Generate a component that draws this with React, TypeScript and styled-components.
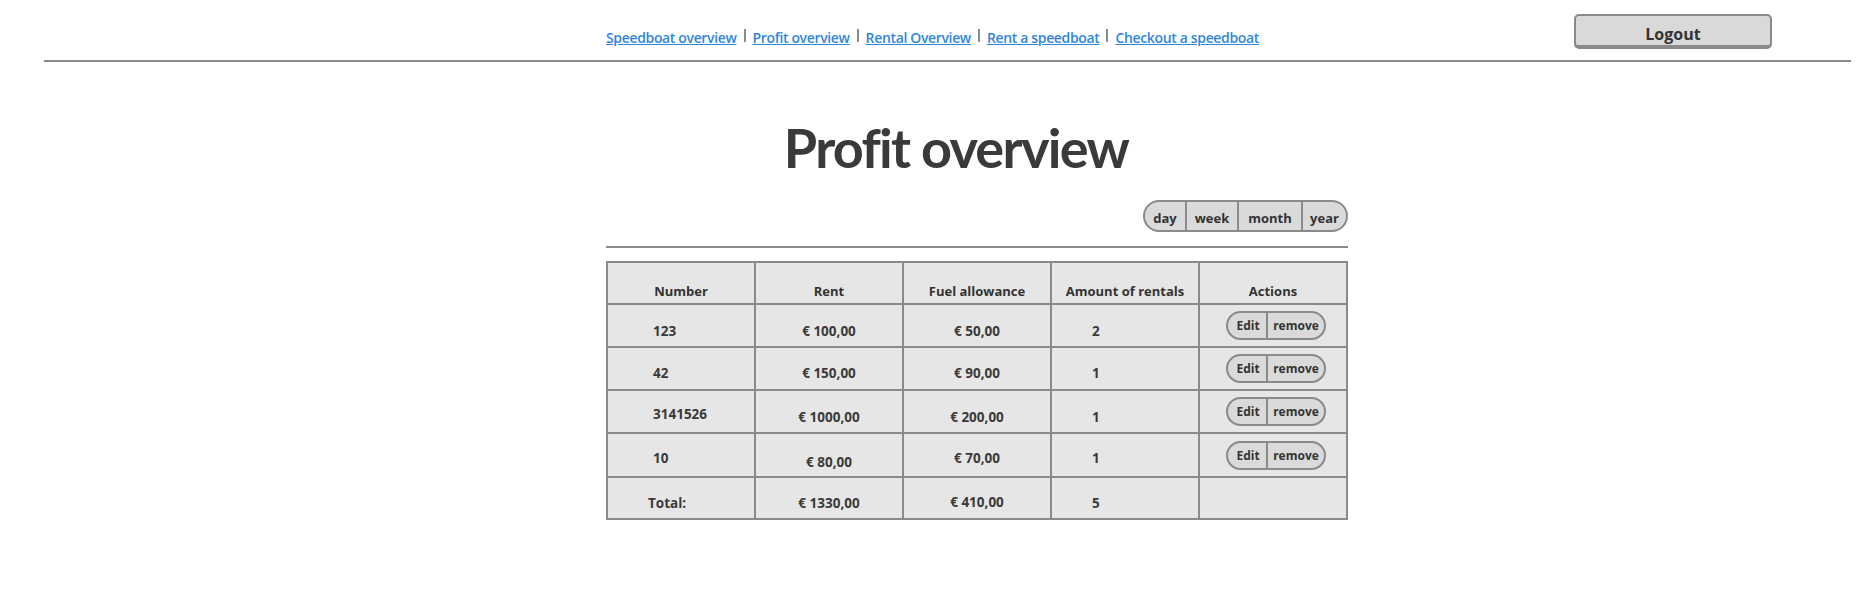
import React from "react";
import styled, { createGlobalStyle } from "styled-components";

const Global = createGlobalStyle`
  html, body { margin: 0; padding: 0; background: #ffffff; }
  body { font-family: "Open Sans", "Liberation Sans", sans-serif; color: #3a3a3a; }
`;

const Page = styled.div`
  width: 1872px;
  height: 600px;
  display: flex;
  flex-direction: column;
`;

const Header = styled.header`
  margin-left: 44px;
  width: 1807px;
  height: 62px;
  box-sizing: border-box;
  border-bottom: 2px solid #8a8a8a;
  display: flex;
  align-items: flex-start;
  padding-left: 562px;
`;

const Nav = styled.nav`
  display: flex;
  align-items: center;
  margin-top: 28px;
`;

const NavLink = styled.a`
  font-size: 14px;
  font-weight: 600;
  color: #2f86db;
  text-decoration: underline;
  text-underline-offset: 1px;
  letter-spacing: -0.35px;
  cursor: pointer;
`;

const Sep = styled.span`
  display: inline-block;
  width: 2px;
  height: 13px;
  background: #8a8a8a;
  margin: 0 7px;
  position: relative;
  top: -2px;
`;

const LogoutButton = styled.button`
  margin-left: auto;
  margin-right: 79px;
  margin-top: 14px;
  width: 198px;
  height: 35px;
  box-sizing: border-box;
  background: #d9d9d9;
  border: 2px solid #8a8a8a;
  border-bottom-width: 4px;
  border-radius: 5px;
  font-family: inherit;
  font-size: 16px;
  font-weight: 700;
  color: #333;
  padding: 7px 0 0 0;
  cursor: pointer;
`;

const Title = styled.h1`
  margin: 56px 0 0 0;
  text-align: center;
  font-family: Lato, "Open Sans", sans-serif;
  font-size: 54px;
  line-height: 60px;
  font-weight: 700;
  color: #3a3a3a;
  letter-spacing: -1.7px;
  padding-left: 40px;
`;

const Content = styled.section`
  margin-left: 606px;
  width: 742px;
  display: flex;
  flex-direction: column;
`;

const Toolbar = styled.div`
  display: flex;
  justify-content: flex-end;
  margin-top: 22px;
`;

const Segmented = styled.div`
  display: flex;
  height: 32px;
  box-sizing: border-box;
  border: 2px solid #8a8a8a;
  border-radius: 16px;
  overflow: hidden;
  background: #dadada;
`;

const Segment = styled.button<{ $w: number }>`
  width: ${(p) => p.$w}px;
  height: 100%;
  box-sizing: border-box;
  background: transparent;
  border: none;
  border-left: 2px solid #8a8a8a;
  font-family: inherit;
  font-size: 13px;
  font-weight: 700;
  color: #333;
  padding: 4px 0 0 0;
  cursor: pointer;
  &:first-child { border-left: none; }
`;

const Rule = styled.hr`
  margin: 14px 0 0 0;
  border: none;
  height: 2px;
  background: #8a8a8a;
`;

const Table = styled.table`
  margin-top: 13px;
  border-collapse: collapse;
  width: 742px;
  table-layout: fixed;
  background: #e6e6e6;
  border: 2px solid #8a8a8a;
`;

const Th = styled.th`
  border: 2px solid #8a8a8a;
  height: 42px;
  box-sizing: border-box;
  padding: 16px 0 0 0;
  font-size: 13px;
  font-weight: 700;
  color: #333;
  text-align: center;
  vertical-align: middle;
`;

const Td = styled.td<{ $align?: "left" | "center"; $indent?: number; $drop?: number; $h?: number }>`
  border: 2px solid #8a8a8a;
  height: ${(p) => p.$h ?? 43}px;
  box-sizing: border-box;
  padding: ${(p) => p.$drop ?? 12}px 0 0 ${(p) => p.$indent ?? 0}px;
  font-size: 13.5px;
  font-weight: 700;
  color: #3a3a3a;
  text-align: ${(p) => p.$align ?? "center"};
  vertical-align: middle;
  white-space: pre;
`;

const ActionCell = styled.td`
  border: 2px solid #8a8a8a;
  box-sizing: border-box;
  padding: 0;
  vertical-align: middle;
  text-align: center;
`;

const Pill = styled.div`
  display: inline-flex;
  height: 29px;
  box-sizing: border-box;
  border: 2px solid #8a8a8a;
  border-radius: 15px;
  overflow: hidden;
  background: #dadada;
  vertical-align: middle;
  margin-left: 6px;
`;

const PillButton = styled.button<{ $w: number }>`
  width: ${(p) => p.$w}px;
  height: 100%;
  box-sizing: border-box;
  background: transparent;
  border: none;
  border-left: 2px solid #8a8a8a;
  font-family: inherit;
  font-size: 12px;
  font-weight: 700;
  color: #333;
  padding: 0;
  cursor: pointer;
  &:first-child { border-left: none; padding-left: 2px; }
`;

type Row = {
  number: string;
  rent: string;
  fuel: string;
  amount: string;
  drops: [number, number, number, number];
  h: number;
};

const rows: Row[] = [
  { number: "123", rent: "€ 100,00", fuel: "€ 50,00", amount: "2", drops: [10, 10, 10, 10], h: 43 },
  { number: "42", rent: "€ 150,00", fuel: "€ 90,00", amount: "1", drops: [9, 9, 9, 9], h: 43 },
  { number: "3141526", rent: "€ 1000,00", fuel: "€ 200,00", amount: "1", drops: [4, 11, 11, 11], h: 43 },
  { number: "10", rent: "€ 80,00", fuel: "€ 70,00", amount: "1", drops: [5, 13, 5, 5], h: 44 },
];

const links = [
  "Speedboat overview",
  "Profit overview",
  "Rental Overview",
  "Rent a speedboat",
  "Checkout a speedboat",
];

export default function App() {
  return (
    <Page>
      <Global />
      <Header>
        <Nav>
          {links.map((l, i) => (
            <React.Fragment key={l}>
              {i > 0 && <Sep />}
              <NavLink>{l}</NavLink>
            </React.Fragment>
          ))}
        </Nav>
        <LogoutButton>Logout</LogoutButton>
      </Header>
      <Title>Profit overview</Title>
      <Content>
        <Toolbar>
          <Segmented>
            <Segment $w={40}>day</Segment>
            <Segment $w={52}>week</Segment>
            <Segment $w={64}>month</Segment>
            <Segment $w={45}>year</Segment>
          </Segmented>
        </Toolbar>
        <Rule />
        <Table>
          <thead>
            <tr>
              <Th>Number</Th>
              <Th>Rent</Th>
              <Th>Fuel allowance</Th>
              <Th>Amount of rentals</Th>
              <Th>Actions</Th>
            </tr>
          </thead>
          <tbody>
            {rows.map((r) => (
              <tr key={r.number}>
                <Td $align="left" $indent={45} $drop={r.drops[0]} $h={r.h}>{r.number}</Td>
                <Td $drop={r.drops[1]} $h={r.h}>{r.rent}</Td>
                <Td $drop={r.drops[2]} $h={r.h}>{r.fuel}</Td>
                <Td $align="left" $indent={40} $drop={r.drops[3]} $h={r.h}>{r.amount}</Td>
                <ActionCell>
                  <Pill>
                    <PillButton $w={38}>Edit</PillButton>
                    <PillButton $w={58}>remove</PillButton>
                  </Pill>
                </ActionCell>
              </tr>
            ))}
            <tr>
              <Td $align="left" $indent={40} $drop={10} $h={42}>Total:</Td>
              <Td $drop={10} $h={42}>€ 1330,00</Td>
              <Td $drop={8} $h={42}>€ 410,00</Td>
              <Td $align="left" $indent={40} $drop={10} $h={42}>5</Td>
              <ActionCell />
            </tr>
          </tbody>
        </Table>
      </Content>
    </Page>
  );
}
